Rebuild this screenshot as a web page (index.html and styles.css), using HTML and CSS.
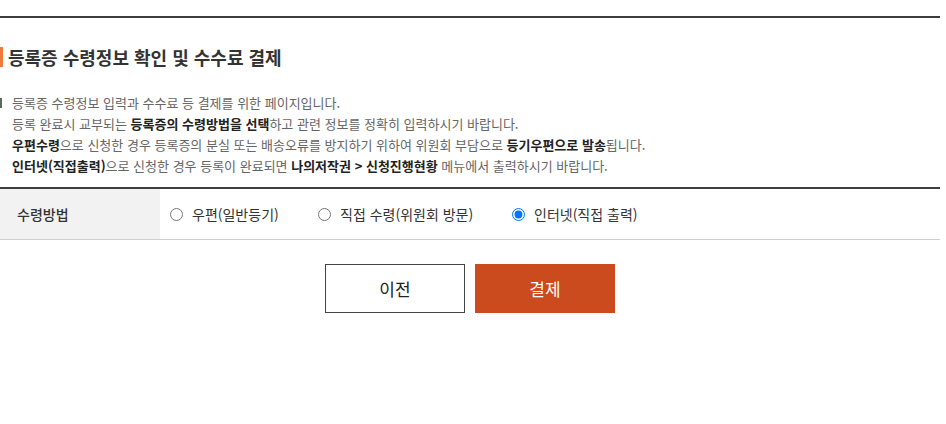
FILE: index.html
```html
<!DOCTYPE html>
<html lang="ko">
<head>
<meta charset="utf-8">
<title>등록증 수령정보 확인 및 수수료 결제</title>
<link rel="stylesheet" href="styles.css">
</head>
<body>
<div class="page">
  <div class="topline"></div>
  <h2 class="title">등록증 수령정보 확인 및 수수료 결제</h2>
  <div class="desc">
    <p class="first">등록증 수령정보 입력과 수수료 등 결제를 위한 페이지입니다.</p>
    <p>등록 완료시 교부되는 <b>등록증의 수령방법을 선택</b>하고 관련 정보를 정확히 입력하시기 바랍니다.</p>
    <p><b>우편수령</b>으로 신청한 경우 등록증의 분실 또는 배송오류를 방지하기 위하여 위원회 부담으로 <b>등기우편으로 발송</b>됩니다.</p>
    <p><b>인터넷(직접출력)</b>으로 신청한 경우 등록이 완료되면 <b>나의저작권 &gt; 신청진행현황</b> 메뉴에서 출력하시기 바랍니다.</p>
  </div>
  <div class="row">
    <div class="label">수령방법</div>
    <div class="options">
      <label class="opt o1"><input type="radio" name="m"> 우편(일반등기)</label>
      <label class="opt o2"><input type="radio" name="m"> 직접 수령(위원회 방문)</label>
      <label class="opt o3"><input type="radio" name="m" checked> 인터넷(직접 출력)</label>
    </div>
  </div>
  <div class="buttons">
    <button class="btn prev">이전</button>
    <button class="btn pay">결제</button>
  </div>
</div>
</body>
</html>
```
FILE: styles.css
```css
html, body {
  margin: 0;
  padding: 0;
  background: #fff;
}
body {
  font-family: "Noto Sans CJK KR", "Noto Sans", sans-serif;
  color: #333;
}
.page {
  width: 940px;
  padding-top: 16px;
}
.topline {
  height: 2px;
  background: #3d3d3d;
}
.title {
  margin: 29px 0 0 0;
  height: 20px;
  line-height: 20px;
  font-size: 18px;
  font-weight: 700;
  color: #333;
  border-left: 3px solid #f07a3c;
  padding-left: 5px;
}
.desc {
  margin-top: 25px;
  font-size: 13px;
  line-height: 21px;
  color: #666;
}
.desc p {
  margin: 0;
  padding-left: 12px;
}
.desc p.first {
  position: relative;
}
.desc p.first::before {
  content: "";
  position: absolute;
  left: 0;
  top: 6px;
  width: 2px;
  height: 10px;
  background: #5b6b5b;
}
.desc b {
  color: #222;
  font-weight: 700;
}
.row {
  margin-top: 11px;
  display: flex;
  height: 50px;
  border-top: 2px solid #3d3d3d;
  border-bottom: 1px solid #cfcfcf;
}
.label {
  width: 143px;
  padding-left: 17px;
  background: #f2f2f2;
  display: flex;
  align-items: center;
  font-size: 14px;
  font-weight: 500;
  color: #333;
}
.options {
  display: flex;
  align-items: center;
  padding-left: 10px;
  font-size: 14px;
  color: #333;
}
.opt {
  display: flex;
  align-items: center;
}
.opt input {
  margin: 0 9px 0 0;
  width: 13px;
  height: 13px;
}
.o1 { width: 148px; }
.o2 { width: 194px; }
.buttons {
  display: flex;
  justify-content: center;
  gap: 10px;
  margin-top: 24px;
}
.btn {
  width: 140px;
  height: 49px;
  font-family: "Noto Sans CJK KR", sans-serif;
  font-size: 17px;
  cursor: pointer;
  padding: 0;
}
.prev {
  background: #fff;
  border: 1px solid #444;
  color: #222;
}
.pay {
  background: #cc4b1e;
  border: 1px solid #cc4b1e;
  color: #fff;
}
```
